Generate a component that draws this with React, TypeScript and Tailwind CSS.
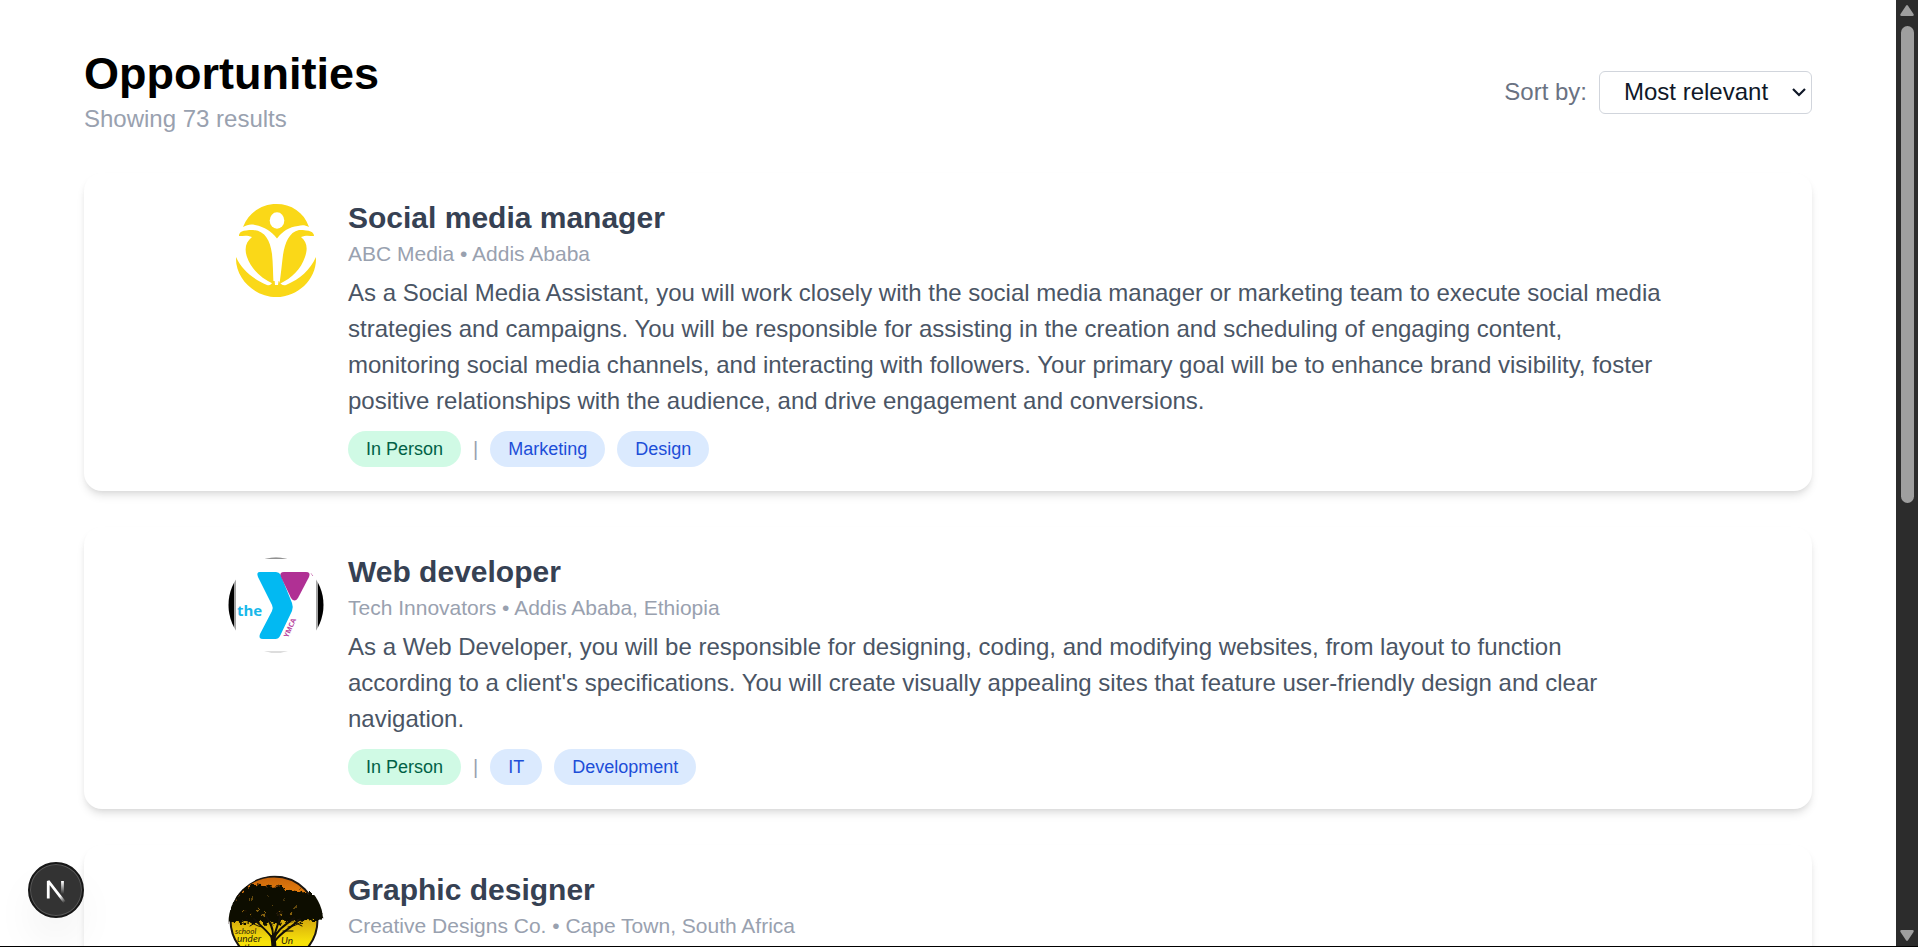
import React from "react";

type Job = {
  title: string;
  company: string;
  place: string;
  description: string;
  mode: string;
  tags: string[];
  logo: React.ReactNode;
};

function FigureLogo() {
  return (
    <svg viewBox="0 0 96 96" className="size-24 shrink-0" role="img" aria-label="ABC Media">
      <g fill="#fad818">
        <path d="M15 24C21 9 34 1 48.500 1S76 9 81 24c-4-2-7-2-11-1-9 1-15 5-21 12.500C43 28 37 24 27 22c-5-1-8 0-12 2z" />
        <path d="M11 33c0-4 3-6 14-6 12 1 17 10 19 24 1 9 1 19 1.500 30C33 75 23 66 19 54c-3-9-1-15 5-20-5-2-8-1-13-1z" />
        <path d="M86 33c0-4-4-6-15-6-10 2-14 13-16 25-1 8-2 18-3.500 29C64 75 73 66 77 54c3-9 2-15-4-20 5-2 8-1 13-1z" />
        <path d="M8 54c6 13 17 22 31 28 3 1 5-1 6-4h6c1 3 4 5 7 4 14-6 24-15 30-28 1 22-18 40-39.500 40S7 76 8 54z" />
      </g>
      <ellipse cx="49" cy="17.500" rx="7.300" ry="8.300" fill="#fff" />
      <path d="M45 60l2 22h3l3-22z" fill="#fff" />
    </svg>
  );
}

function YLogo() {
  return (
    <svg viewBox="0 0 96 96" className="size-24 shrink-0" role="img" aria-label="Tech Innovators">
      <defs>
        <clipPath id="round-y">
          <circle cx="48" cy="48" r="47.500" />
        </clipPath>
      </defs>
      <g clipPath="url(#round-y)">
        <rect width="96" height="96" fill="#fff" />
        <rect width="6" height="96" fill="#000" />
        <rect x="6" width="2" height="96" fill="#a3a3a3" />
        <rect x="90" width="6" height="96" fill="#000" />
        <rect x="88" width="2" height="96" fill="#a3a3a3" />
        <rect width="96" height="1.800" fill="#777" />
        <rect y="94.500" width="96" height="1.500" fill="#bbb" />
        <path d="M32 15h16q3 0 4.500 2.500L64 46q1.500 4 0 8L52 79q-1.500 3-4.500 3H35q-5 0-3-5l12-23q1.500-3 0-6L30 20q-2-5 2-5z" fill="#02b9f2" />
        <path d="M56 15h22q5 0 3 5L70 41q-3.500 5-7 0L53 20q-2-5 3-5z" fill="#b03094" />
        <text x="9" y="59" fontFamily="Open Sans, sans-serif" fontWeight="700" fontSize="15" fill="#18b8ea">the</text>
        <text transform="translate(60 81) rotate(-66)" fontFamily="Open Sans, sans-serif" fontWeight="700" fontSize="7" fill="#b8479f">YMCA</text>
        <path d="M83 16l2 3" stroke="#c668ad" strokeWidth="1" />
      </g>
    </svg>
  );
}

function TreeLogo() {
  return (
    <svg viewBox="0 0 96 96" className="size-24 shrink-0" role="img" aria-label="Creative Designs Co.">
      <defs>
        <linearGradient id="sunset" x1="0" y1="0" x2="0" y2="1">
          <stop offset="0" stopColor="#c9650c" />
          <stop offset="0.250" stopColor="#ec850c" />
          <stop offset="0.500" stopColor="#d6aa0c" />
          <stop offset="0.750" stopColor="#f7e20a" />
        </linearGradient>
        <clipPath id="round-tree">
          <circle cx="48" cy="48" r="47.500" />
        </clipPath>
        <filter id="leaves" x="-10%" y="-10%" width="120%" height="120%">
          <feTurbulence type="fractalNoise" baseFrequency="0.250" numOctaves="3" seed="4" result="noise" />
          <feDisplacementMap in="SourceGraphic" in2="noise" scale="9" xChannelSelector="R" yChannelSelector="G" />
        </filter>
      </defs>
      <g clipPath="url(#round-tree)">
        <circle cx="46" cy="45" r="43.500" fill="url(#sunset)" stroke="#1b1712" strokeWidth="2" />
        <g filter="url(#leaves)">
          <path d="M0 45l1-12 5-8 7-7 8-8 6 0 5 1 6-1 7 2 6-1 6 3 6 1 5 1 7 1 4 2 7 0 5 4 4 6 1 14-4 3-6 0-7-1-6 2-5-2-6 3-6-2-6 3-7-2-6 3-7-3-5 2-7-2-6 1-6-2-5 2-7-2z" fill="#0d0b06" />
          <g fill="#8a650e">
            <circle cx="23" cy="24" r="0.900" /><circle cx="29" cy="34" r="1.200" /><circle cx="38" cy="20" r="0.800" />
            <circle cx="45" cy="30" r="0.900" /><circle cx="57" cy="24" r="0.800" /><circle cx="67" cy="32" r="0.900" />
            <circle cx="16" cy="36" r="1.200" /><circle cx="52" cy="38" r="1.300" /><circle cx="22" cy="40" r="1.200" />
            <circle cx="36" cy="39" r="1.400" /><circle cx="64" cy="39" r="1.200" /><circle cx="42" cy="36" r="0.900" />
          </g>
        </g>
        <g fill="none" stroke="#120f08" strokeLinecap="round">
          <path d="M46 96c1-14 0-26-1-34" strokeWidth="5" />
          <path d="M46 66c-4-8-10-12-20-22M45 60c0-8-3-13-7-19M46 64c3-9 10-13 20-21M47 66c6-9 15-12 25-22M46 62c2-9 5-14 6-21" strokeWidth="2" />
          <path d="M34 52c-6-1-10-4-16-8M60 52c8-1 12-4 17-8M30 46l-8 5M66 47l8 4M55 56h10" strokeWidth="1" />
        </g>
        <g fontFamily="Lato, sans-serif" fontStyle="italic" fill="#29220a">
          <text x="7" y="59" fontSize="8">school</text>
          <text x="9" y="67" fontSize="10">under</text>
          <text x="16" y="76" fontSize="9">the</text>
          <text x="53" y="69" fontSize="10">Un</text>
        </g>
      </g>
    </svg>
  );
}

const jobs: Job[] = [
  {
    title: "Social media manager",
    company: "ABC Media",
    place: "Addis Ababa",
    description:
      "As a Social Media Assistant, you will work closely with the social media manager or marketing team to execute social media strategies and campaigns. You will be responsible for assisting in the creation and scheduling of engaging content, monitoring social media channels, and interacting with followers. Your primary goal will be to enhance brand visibility, foster positive relationships with the audience, and drive engagement and conversions.",
    mode: "In Person",
    tags: ["Marketing", "Design"],
    logo: <FigureLogo />,
  },
  {
    title: "Web developer",
    company: "Tech Innovators",
    place: "Addis Ababa, Ethiopia",
    description:
      "As a Web Developer, you will be responsible for designing, coding, and modifying websites, from layout to function according to a client's specifications. You will create visually appealing sites that feature user-friendly design and clear navigation.",
    mode: "In Person",
    tags: ["IT", "Development"],
    logo: <YLogo />,
  },
  {
    title: "Graphic designer",
    company: "Creative Designs Co.",
    place: "Cape Town, South Africa",
    description: "",
    mode: "",
    tags: [],
    logo: <TreeLogo />,
  },
];

function JobCard({ job }: { job: Job }) {
  return (
    <article className="flex gap-6 rounded-[18px] bg-white px-36 py-6 shadow-[0_6px_9px_-1px_rgba(0,0,0,0.1),0_3px_6px_-3px_rgba(0,0,0,0.1)]">
      <div className="shrink-0 pt-1.5">{job.logo}</div>
      <div className="min-w-0 flex-1">
        <h2 className="text-[30px] leading-[42px] font-bold text-gray-700">{job.title}</h2>
        <p className="text-[21px] leading-[30px] text-gray-400">
          {job.company} • {job.place}
        </p>
        {job.description && <p className="mt-1.5 text-2xl leading-9 text-gray-600">{job.description}</p>}
        {job.mode && (
          <div className="mt-3 flex items-center gap-3 text-lg leading-6">
            <span className="rounded-full bg-emerald-100 px-[18px] py-1.5 text-emerald-800">{job.mode}</span>
            <span className="text-xl leading-6 text-gray-400">|</span>
            {job.tags.map((tag) => (
              <span key={tag} className="rounded-full bg-blue-100 px-[18px] py-1.5 text-[#1d4ed8]">
                {tag}
              </span>
            ))}
          </div>
        )}
      </div>
    </article>
  );
}

function ScrollTrack() {
  return (
    <div className="flex w-[22px] shrink-0 flex-col items-center justify-between bg-[#2c2c2c] py-[5px]" aria-hidden="true">
      <div className="flex h-[53.2%] w-full flex-col items-center gap-[10px]">
        <svg viewBox="0 0 14 11" className="h-[11px] w-[14px] shrink-0" fill="#9f9f9f">
          <path d="M6 .7q1-1.200 2 0l5.500 8.300q.8 2-1 2h-11q-1.800 0-1-2z" />
        </svg>
        <div className="w-[13px] flex-1 rounded-full bg-[#9f9f9f]" />
      </div>
      <svg viewBox="0 0 14 11" className="h-[11px] w-[14px] shrink-0" fill="#9f9f9f">
        <path d="M6 10.300q1 1.200 2 0l5.500-8.300q.8-2-1-2h-11q-1.800 0-1 2z" />
      </svg>
    </div>
  );
}

function DevToolsButton() {
  return (
    <button
      type="button"
      aria-label="Open Next.js Dev Tools"
      className="absolute bottom-7 left-7 flex size-14 items-center justify-center rounded-full border-2 border-[#171717] bg-[#333] shadow-[inset_0_0_0_1px_rgba(255,255,255,0.18),0_24px_48px_-12px_rgba(0,0,0,0.14)]"
    >
      <svg width="60" height="60" viewBox="0 0 40 40" fill="none" className="shrink-0">
        <g transform="translate(12.500 13)">
          <path d="M13.300 15.200L2.340 1V12.600" stroke="url(#n-diagonal)" strokeWidth="1.860" strokeLinejoin="bevel" />
          <path d="M11.825 1V13.100" stroke="url(#n-stem)" strokeWidth="1.860" />
        </g>
        <defs>
          <linearGradient id="n-diagonal" x1="9.956" y1="11.123" x2="15.478" y2="17.967" gradientUnits="userSpaceOnUse">
            <stop stopColor="white" />
            <stop offset="0.604" stopColor="white" stopOpacity="0" />
            <stop offset="1" stopColor="white" stopOpacity="0" />
          </linearGradient>
          <linearGradient id="n-stem" x1="11.822" y1="1.400" x2="11.792" y2="9.625" gradientUnits="userSpaceOnUse">
            <stop stopColor="white" />
            <stop offset="1" stopColor="white" stopOpacity="0" />
          </linearGradient>
        </defs>
      </svg>
    </button>
  );
}

export default function App() {
  return (
    <div className="relative flex h-screen overflow-hidden border-b border-black bg-white font-['Liberation_Sans',Arial,sans-serif]">
      <main className="min-w-0 flex-1 overflow-hidden px-6 pt-[47px]">
        <div className="mx-auto flex max-w-[1728px] flex-col gap-9">
          <header className="flex items-center justify-between">
            <div>
              <h1 className="text-[45px] leading-[54px] font-bold text-black">Opportunities</h1>
              <p className="text-2xl leading-9 text-gray-400">Showing 73 results</p>
            </div>
            <div className="flex items-center gap-3">
              <label htmlFor="sort" className="text-2xl leading-9 text-gray-500">
                Sort by:
              </label>
              <div className="relative">
                <select
                  id="sort"
                  className="h-[43px] w-[213px] appearance-none rounded-md border border-gray-300 bg-white pl-6 text-2xl text-gray-900"
                >
                  <option>Most relevant</option>
                  <option>Newest</option>
                </select>
                <svg
                  viewBox="0 0 14 9"
                  className="pointer-events-none absolute top-[17px] right-[6px] h-[9px] w-[14px]"
                  fill="none"
                  stroke="#101828"
                  strokeWidth="2.200"
                >
                  <path d="M1 1l6 6 6-6" />
                </svg>
              </div>
            </div>
          </header>
          {jobs.map((job) => (
            <JobCard key={job.title} job={job} />
          ))}
        </div>
      </main>
      <ScrollTrack />
      <DevToolsButton />
    </div>
  );
}
